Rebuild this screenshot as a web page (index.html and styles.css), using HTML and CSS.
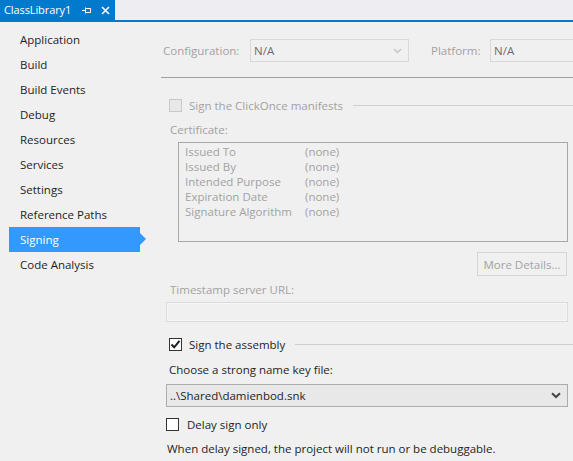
FILE: index.html
```html
<!DOCTYPE html>
<html>
<head>
<meta charset="utf-8">
<link rel="stylesheet" href="styles.css">
</head>
<body>
<div class="tabstrip">
  <div class="tab">
    <span class="tab-title">ClassLibrary1</span>
    <svg class="pin" width="9" height="7" viewBox="0 0 9 7"><path d="M0 3.5H3M3.5 0.5V6.5M3.5 1.5H8.5V5.5H3.5" fill="none" stroke="#ffffff" stroke-width="1"/></svg>
    <svg class="close" width="9" height="9" viewBox="0 0 9 9"><path d="M1 1L8 8M8 1L1 8" stroke="#ffffff" stroke-width="1.6"/></svg>
  </div>
</div>
<div class="main">
  <nav class="sidebar">
    <div class="nav-item">Application</div>
    <div class="nav-item">Build</div>
    <div class="nav-item">Build Events</div>
    <div class="nav-item">Debug</div>
    <div class="nav-item">Resources</div>
    <div class="nav-item">Services</div>
    <div class="nav-item">Settings</div>
    <div class="nav-item">Reference Paths</div>
    <div class="nav-item active">Signing</div>
    <div class="nav-item">Code Analysis</div>
  </nav>
  <section class="content">
    <div class="config-row">
      <span class="dim cfg-label">Configuration:</span>
      <div class="combo disabled cfg-combo"><span>N/A</span>
        <svg class="chev" width="9" height="6" viewBox="0 0 9 6"><path d="M1 1L4.5 4.5L8 1" fill="none" stroke="#c4c4c4" stroke-width="1.5"/></svg>
      </div>
      <span class="dim plat-label">Platform:</span>
      <div class="combo disabled plat-combo"><span>N/A</span></div>
    </div>
    <div class="rule"></div>

    <div class="check-row clickonce">
      <span class="box disabled-box"></span>
      <span class="dim check-label">Sign the ClickOnce manifests</span>
      <span class="group-line"></span>
    </div>

    <div class="dim label cert-label">Certificate:</div>
    <div class="cert-box">
      <div class="cert-row"><span class="cert-key">Issued To</span><span>(none)</span></div>
      <div class="cert-row"><span class="cert-key">Issued By</span><span>(none)</span></div>
      <div class="cert-row"><span class="cert-key">Intended Purpose</span><span>(none)</span></div>
      <div class="cert-row"><span class="cert-key">Expiration Date</span><span>(none)</span></div>
      <div class="cert-row"><span class="cert-key">Signature Algorithm</span><span>(none)</span></div>
    </div>

    <div class="btn-row"><div class="button dim">More Details...</div></div>

    <div class="dim label ts-label">Timestamp server URL:</div>
    <div class="textbox"></div>

    <div class="check-row assembly">
      <span class="box enabled-box"><svg width="11" height="11" viewBox="0 0 11 11"><path d="M1.5 5.5L4.2 8.3L9.5 1.8" fill="none" stroke="#1e1e1e" stroke-width="2"/></svg></span>
      <span class="check-label">Sign the assembly</span>
      <span class="group-line"></span>
    </div>

    <div class="label key-label">Choose a strong name key file:</div>
    <div class="combo key-combo"><span>..\Shared\damienbod.snk</span>
      <svg class="chev" width="10" height="7" viewBox="0 0 10 7"><path d="M1 1.2L5 5L9 1.2" fill="none" stroke="#444444" stroke-width="2"/></svg>
    </div>

    <div class="check-row delay">
      <span class="box enabled-box"></span>
      <span class="check-label">Delay sign only</span>
    </div>

    <div class="label note">When delay signed, the project will not run or be debuggable.</div>
  </section>
</div>
</body>
</html>
```

FILE: styles.css
```css
html, body {
  margin: 0;
  padding: 0;
}
body {
  width: 573px;
  height: 461px;
  overflow: hidden;
  background: #f0f0f0;
  font-family: "Open Sans", "Noto Sans", sans-serif;
  font-size: 11.5px;
  color: #1e1e1e;
}
.tabstrip {
  height: 20px;
  border-bottom: 2px solid #007acc;
  display: flex;
  background: #eeeef2;
}
.tab {
  width: 115px;
  height: 20px;
  background: #007acc;
  color: #ffffff;
  display: flex;
  align-items: center;
  box-sizing: border-box;
  padding-left: 4px;
}
.tab-title {
  line-height: 20px;
  width: 74px;
  flex: none;
  font-size: 11px;
  letter-spacing: -0.1px;
}
.pin {
  margin-left: 4px;
}
.close {
  margin-left: 10px;
}
.main {
  display: flex;
}
.sidebar {
  width: 161px;
  flex: none;
  padding-top: 5px;
}
.nav-item {
  height: 25px;
  line-height: 26px;
  margin-left: 9px;
  width: 131px;
  padding-left: 11px;
  box-sizing: border-box;
  position: relative;
}
.nav-item.active {
  background: #3399ff;
  color: #ffffff;
}
.nav-item.active::after {
  content: "";
  position: absolute;
  right: -6px;
  top: 6px;
  border-left: 6px solid #3399ff;
  border-top: 6.5px solid transparent;
  border-bottom: 6.5px solid transparent;
}
.content {
  flex: 1;
  min-width: 0;
  overflow: hidden;
  padding-right: 5px;
}
.dim {
  color: #a2a2a2;
}
.config-row {
  display: flex;
  align-items: center;
  margin-top: 17px;
  height: 23px;
  white-space: nowrap;
}
.cfg-label {
  margin-left: 2px;
  width: 87px;
  flex: none;
}
.combo {
  height: 23px;
  box-sizing: border-box;
  border: 1px solid #acacac;
  background: #e8e8e8;
  display: flex;
  align-items: center;
  padding-left: 3px;
  padding-right: 6px;
  justify-content: space-between;
  flex: none;
}
.combo.disabled {
  border-color: #d9d9d9;
  background: #f0f0f0;
  color: #6d6d6d;
}
.cfg-combo {
  width: 159px;
}
.plat-label {
  margin-left: 22px;
  width: 59px;
  flex: none;
}
.plat-combo {
  width: 159px;
}
.rule {
  height: 1px;
  background: #a0a0a0;
  margin-top: 15px;
  margin-right: -5px;
}
.check-row {
  display: flex;
  align-items: center;
  height: 20px;
}
.box {
  width: 13px;
  height: 13px;
  box-sizing: border-box;
  flex: none;
  display: flex;
  align-items: center;
  justify-content: center;
}
.disabled-box {
  border: 1px solid #c8c8c8;
  background: #e8e8e8;
}
.enabled-box {
  border: 1px solid #333333;
  background: #ffffff;
}
.check-label {
  margin-left: 7px;
  white-space: nowrap;
}
.group-line {
  flex: 1;
  height: 1px;
  background: #cfcfcf;
  margin-left: 10px;
  margin-right: -5px;
}
.clickonce {
  margin-top: 17px;
  padding-left: 8px;
}
.label {
  line-height: 16px;
  white-space: nowrap;
}
.cert-label {
  margin-top: 7px;
  padding-left: 9px;
}
.cert-box {
  margin-top: 4px;
  margin-left: 17px;
  height: 100px;
  box-sizing: border-box;
  border: 1px solid #a8a8a8;
  padding: 1px 0 0 6px;
  color: #a2a2a2;
}
.cert-row {
  display: flex;
  height: 15px;
  line-height: 15px;
}
.cert-key {
  width: 120px;
}
.btn-row {
  display: flex;
  justify-content: flex-end;
  margin-top: 10px;
  padding-right: 1px;
}
.button {
  width: 90px;
  height: 24px;
  box-sizing: border-box;
  border: 1px solid #d5d5d5;
  display: flex;
  align-items: center;
  justify-content: center;
}
.ts-label {
  margin-top: 6px;
  padding-left: 9px;
}
.textbox {
  margin-top: 4px;
  margin-left: 5px;
  height: 20px;
  box-sizing: border-box;
  border: 1px solid #dadada;
  background: #f0f0f0;
  box-shadow: inset 0 0 0 1px #f7f7f7;
}
.assembly {
  margin-top: 12px;
  padding-left: 8px;
}
.key-label {
  margin-top: 8px;
  padding-left: 8px;
}
.key-combo {
  margin-top: 6px;
  margin-left: 5px;
  height: 23px;
  padding-right: 6px;
}
.delay {
  margin-top: 7px;
  padding-left: 5px;
}
.delay .check-label {
  margin-left: 8px;
}
.note {
  margin-top: 7px;
  padding-left: 6px;
}
```
